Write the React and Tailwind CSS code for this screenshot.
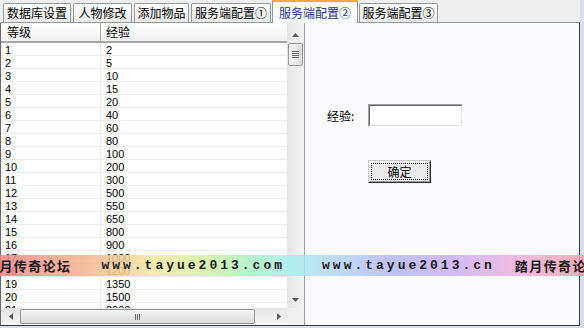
import React from 'react';

const tabs = [
  { label: '数据库设置', w: 'w-[68px]', ml: '' },
  { label: '人物修改', w: 'w-[59px]', ml: 'ml-[2px]' },
  { label: '添加物品', w: 'w-[55px]', ml: 'ml-[2px]' },
  { label: '服务端配置①', w: 'w-[80px]', ml: 'ml-[2px]' },
  { label: '服务端配置②', w: 'w-[86px]', ml: 'ml-[1px]', active: true },
  { label: '服务端配置③', w: 'w-[79px]', ml: 'ml-[1px]' },
];

const levels = [2, 5, 10, 15, 20, 40, 60, 80, 100, 200, 300, 500, 550, 650, 800, 900, 1000, 1200, 1350, 1500, 2000];

const Arrow = ({ dir }) => {
  const pts = {
    up: '0,4 3.5,0 7,4',
    down: '0,0 7,0 3.5,4',
    left: '4,0 0,3.5 4,7',
    right: '0,0 4,3.5 0,7',
  };
  const vertical = dir === 'up' || dir === 'down';
  return (
    <svg width={vertical ? 7 : 4} height={vertical ? 4 : 7} viewBox={vertical ? '0 0 7 4' : '0 0 4 7'}>
      <polygon points={pts[dir]} fill="#5c5c5c" />
    </svg>
  );
};

const Tab = ({ tab }) => {
  if (tab.active) {
    return (
      <div className={`${tab.w} ${tab.ml} relative z-10 -mb-px flex h-[23px] items-center justify-center border-x border-t-2 border-x-[#919b9c] border-t-[#eea948] bg-[#fbfbfd] text-[#23368c]`}>
        {tab.label}
      </div>
    );
  }
  return (
    <div className={`${tab.w} ${tab.ml} flex h-[19px] items-center justify-center rounded-t-[2px] border-x border-t border-[#919b9c] bg-gradient-to-b from-white to-[#e9e9e9]`}>
      {tab.label}
    </div>
  );
};

export default function App() {
  return (
    <div className="relative h-[328px] w-[584px] overflow-hidden bg-[#d6dfea] font-['Noto_Sans_CJK_SC',sans-serif] text-[12px] text-black">
      <div className="flex h-[326px] w-[580px] flex-col bg-[#efefef]">
        {/* tab strip */}
        <div className="flex h-[22px] items-end pl-[3px] leading-none">
          {tabs.map((t) => (
            <Tab key={t.label} tab={t} />
          ))}
        </div>

        <div className="flex min-h-0 flex-1 border-y border-r border-t-[#919b9c] border-b-[#3c3c3c] border-r-[#3c3c3c] bg-[#fbfbfd]">
          {/* list view */}
          <div className="flex h-full w-[305px] flex-col border-x border-l-[#6a6a6a] border-r-[#a0a0a0] bg-white">
            <div className="flex min-h-0 flex-1">
              <div className="flex w-[286px] flex-col">
                <div className="flex h-[20px] border-b-2 border-b-[#a6a6a6] bg-gradient-to-b from-white to-[#f0f0f0] leading-none">
                  <div className="flex w-[100px] items-center border-r border-r-[#a8a8a8] pl-[6px]">等级</div>
                  <div className="flex items-center pl-[5px]">经验</div>
                </div>
                <div className="min-h-0 flex-1 overflow-hidden font-['Liberation_Sans',sans-serif] text-[11px] leading-[14px]">
                  {levels.map((exp, i) => (
                    <div key={i} className="flex h-[13px] border-b border-b-[#ececec]">
                      <div className="w-[100px] border-r border-r-[#ececec] pl-[4px]">{i + 1}</div>
                      <div className="pl-[5px]">{exp}</div>
                    </div>
                  ))}
                </div>
              </div>
              {/* vertical scrollbar */}
              <div className="flex w-[17px] flex-col bg-gradient-to-r from-[#e6e6e6] to-[#f4f4f4]">
                <div className="flex h-[20px] items-center justify-center pt-[3px]">
                  <Arrow dir="up" />
                </div>
                <div className="mx-px flex h-[23px] flex-col items-center justify-center gap-[1px] rounded-[2px] border border-[#979797] bg-gradient-to-r from-[#f6f6f6] to-[#dadada]">
                  <div className="h-px w-[7px] bg-[#6e6e6e]" />
                  <div className="h-px w-[7px] bg-[#6e6e6e]" />
                  <div className="h-px w-[7px] bg-[#6e6e6e]" />
                  <div className="h-px w-[7px] bg-[#6e6e6e]" />
                </div>
                <div className="flex-1" />
                <div className="flex h-[17px] items-center justify-center">
                  <Arrow dir="down" />
                </div>
              </div>
            </div>
            {/* horizontal scrollbar */}
            <div className="flex h-[17px]">
              <div className="flex w-[286px] bg-gradient-to-b from-[#e6e6e6] to-[#f4f4f4]">
                <div className="flex w-[19px] items-center justify-center">
                  <Arrow dir="left" />
                </div>
                <div className="my-px flex w-[235px] items-center justify-center gap-[1px] rounded-[2px] border border-[#979797] bg-gradient-to-b from-[#f6f6f6] to-[#dadada]">
                  <div className="h-[6px] w-px bg-[#6e6e6e]" />
                  <div className="h-[6px] w-px bg-[#6e6e6e]" />
                  <div className="h-[6px] w-px bg-[#6e6e6e]" />
                </div>
                <div className="flex-1" />
                <div className="flex w-[17px] items-center justify-center">
                  <Arrow dir="right" />
                </div>
              </div>
              <div className="w-[17px] bg-[#f0f0f0]" />
            </div>
          </div>

          {/* form */}
          <div className="flex flex-1 flex-col pl-[22px] pt-[81px]">
            <div className="flex h-[23px] items-center">
              <div className="w-[41px]">经验:</div>
              <div className="h-[23px] w-[95px] border border-b-white border-l-[#a0a0a0] border-r-white border-t-[#a0a0a0]">
                <div className="h-full border border-b-[#e3e3e3] border-l-[#696969] border-r-[#e3e3e3] border-t-[#696969] bg-white" />
              </div>
            </div>
            <div className="ml-[41px] mt-[33px] h-[23px] w-[63px] border border-b-[#2e2e2e] border-l-[#c8c8c8] border-r-[#2e2e2e] border-t-[#c8c8c8]">
              <div className="flex h-full border border-b-[#a0a0a0] border-l-white border-r-[#a0a0a0] border-t-white bg-[#ececec] p-[1px]">
                <div className="flex flex-1 items-center justify-center border border-dotted border-black leading-none">确定</div>
              </div>
            </div>
          </div>
        </div>
      </div>

      {/* watermark banner */}
      <div className="absolute left-0 top-[255px] flex h-[21px] w-[584px] items-center overflow-hidden whitespace-nowrap bg-[linear-gradient(90deg,#f08484d9_0%,#f5b08ed9_14%,#f4e8a0d9_26%,#d4f2a2d9_35%,#a8f0c4d9_43%,#a6eef0d9_50%,#b6d4f6d9_58%,#b4b6f4d9_68%,#cab0f2d9_78%,#eeb0e0d9_88%,#f4a0aad9_100%)] text-[13px] font-bold leading-none text-[#1c1c1c]">
        <span className="ml-[-15px] shrink-0 tracking-[1.4px]">踏月传奇论坛</span>
        <span className="ml-[30px] shrink-0 font-['Liberation_Mono',monospace] tracking-[3px]">www.tayue2013.com</span>
        <span className="ml-[37px] shrink-0 font-['Liberation_Mono',monospace] tracking-[3px]">www.tayue2013.cn</span>
        <span className="ml-[20px] shrink-0 tracking-[1.4px]">踏月传奇论坛</span>
      </div>
    </div>
  );
}
